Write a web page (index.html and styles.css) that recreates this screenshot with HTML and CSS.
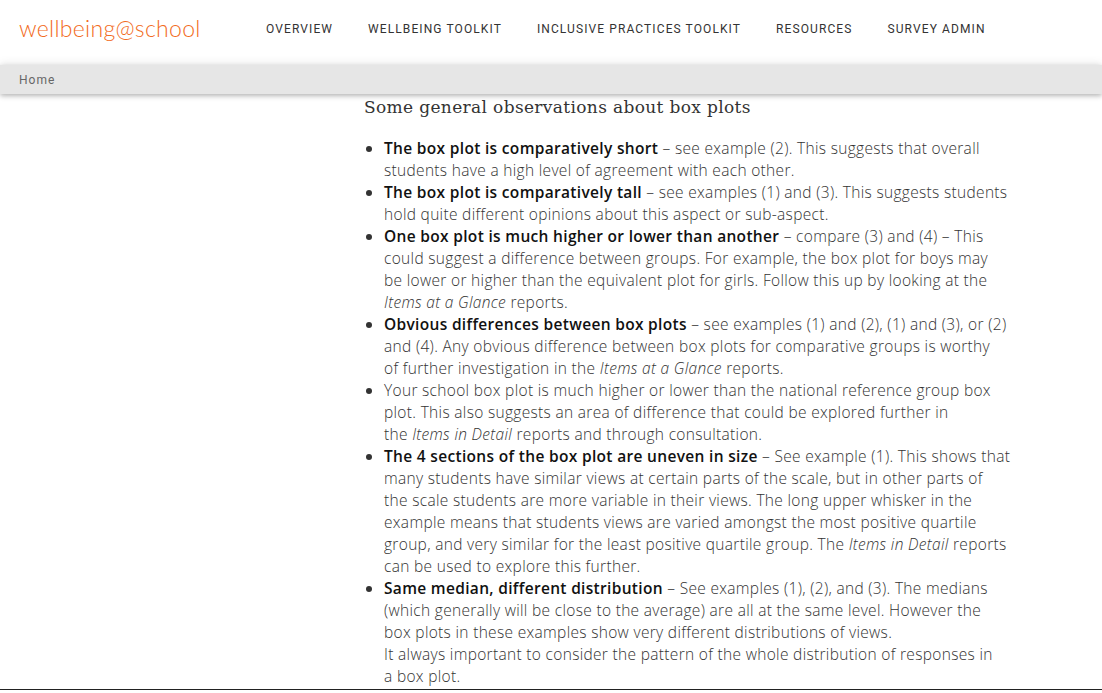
FILE: index.html
```html
<!DOCTYPE html>
<html lang="en">
<head>
<meta charset="utf-8">
<title>Box plots - wellbeing@school</title>
<link rel="stylesheet" href="styles.css">
</head>
<body>
<header class="topbar">
  <a class="logo" href="#">wellbeing@school</a>
  <nav class="mainnav">
    <a href="#">Overview</a>
    <a href="#">Wellbeing Toolkit</a>
    <a href="#">Inclusive Practices Toolkit</a>
    <a href="#">Resources</a>
    <a href="#">Survey Admin</a>
  </nav>
</header>
<div class="crumbs"><a href="#">Home</a></div>
<main class="page">
  <aside class="sidebar"></aside>
  <article class="content">
    <h2 class="heading">Some general observations about box plots</h2>
    <ul class="points">
      <li><b>The box plot is comparatively short</b> – see example (2). This suggests that overall<br>students have a high level of agreement with each other.</li>
      <li><b>The box plot is comparatively tall</b> – see examples (1) and (3). This suggests students<br>hold quite different opinions about this aspect or sub-aspect.</li>
      <li><b>One box plot is much higher or lower than another</b> – compare (3) and (4) – This<br>could suggest a difference between groups. For example, the box plot for boys may<br>be lower or higher than the equivalent plot for girls. Follow this up by looking at the<br><i>Items at a Glance</i> reports.</li>
      <li><b>Obvious differences between box plots</b> – see examples (1) and (2), (1) and (3), or (2)<br>and (4). Any obvious difference between box plots for comparative groups is worthy<br>of further investigation in the <i>Items at a Glance</i> reports.</li>
      <li>Your school box plot is much higher or lower than the national reference group box<br>plot. This also suggests an area of difference that could be explored further in<br>the <i>Items in Detail</i> reports and through consultation.</li>
      <li><b>The 4 sections of the box plot are uneven in size</b> – See example (1). This shows that<br>many students have similar views at certain parts of the scale, but in other parts of<br>the scale students are more variable in their views. The long upper whisker in the<br>example means that students views are varied amongst the most positive quartile<br>group, and very similar for the least positive quartile group. The <i>Items in Detail</i> reports<br>can be used to explore this further.</li>
      <li><b>Same median, different distribution</b> – See examples (1), (2), and (3). The medians<br>(which generally will be close to the average) are all at the same level. However the<br>box plots in these examples show very different distributions of views.<br>It always important to consider the pattern of the whole distribution of responses in<br>a box plot.</li>
    </ul>
  </article>
</main>
</body>
</html>
```

FILE: styles.css
```css
* { box-sizing: border-box; }
html, body { margin: 0; padding: 0; background: #fff; }
body { font-family: "Open Sans", "Noto Sans", sans-serif; color: #333; overflow: hidden; }
a { text-decoration: none; }

.topbar {
  height: 65px;
  display: flex;
  align-items: center;
  padding-left: 19px;
  background: #fff;
  position: relative;
  z-index: 2;
}
.logo {
  font-family: "Lato", sans-serif;
  font-weight: 300;
  font-size: 23px;
  color: #f26b22;
  letter-spacing: 0.3px;
  width: 247px;
  margin-top: -10px;
}
.mainnav {
  display: flex;
  gap: 35px;
  margin-top: -8px;
}
.mainnav a {
  font-family: "Roboto", sans-serif;
  font-size: 12px;
  text-transform: uppercase;
  letter-spacing: 1.1px;
  color: #333;
}

.crumbs {
  height: 29px;
  background: #e6e6e6;
  display: flex;
  align-items: center;
  padding-left: 19px;
  box-shadow: 0 2px 5px rgba(0, 0, 0, 0.28), 0 -3px 8px rgba(0, 0, 0, 0.06);
  position: relative;
  z-index: 2;
}
.crumbs a {
  font-family: "Roboto", sans-serif;
  font-size: 12px;
  letter-spacing: 1px;
  color: #666;
}

.page {
  display: grid;
  grid-template-columns: 364px 1fr;
  border-bottom: 1px solid #222;
  padding-bottom: 2px;
}
.heading {
  margin: 2px 0 0;
  font-family: "DejaVu Serif", serif;
  font-weight: 400;
  font-size: 17px;
  line-height: 22px;
  letter-spacing: 0.35px;
  color: #333;
}
.points {
  margin: 19px 0 0;
  padding-left: 20px;
  list-style: disc;
}
.points li {
  font-size: 15.5px;
  line-height: 22px;
  font-weight: 300;
  color: #333;
  white-space: nowrap;
  letter-spacing: 0.32px;
}
.points b { font-weight: 600; color: #111; }
.points i { font-style: italic; }
```
